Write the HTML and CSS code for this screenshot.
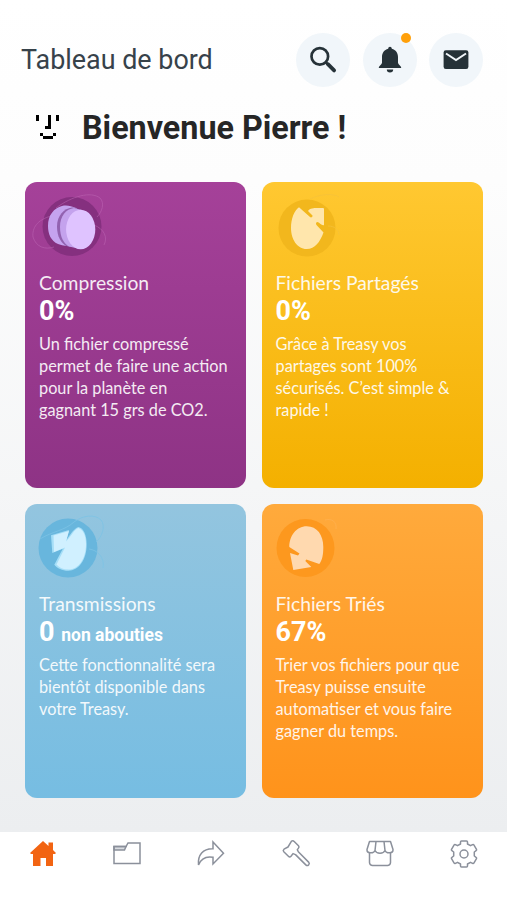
FILE: index.html
```html
<!DOCTYPE html>
<html lang="fr">
<head>
    <meta charset="UTF-8">
    <meta name="viewport" content="width=device-width, initial-scale=1.0">
    <title>Tableau de bord</title>
    <link rel="stylesheet" href="styles.css">
</head>
<body>
    <header class="topbar">
        <h2>Tableau de bord</h2>
        <div class="actions">
            <button class="round" aria-label="Rechercher">
                <svg width="28" height="28" viewBox="0 0 28 28" fill="none" stroke="#263238">
                    <circle cx="10.8" cy="10.4" r="8.3" stroke-width="2.7"/>
                    <path d="M17 16.5l2 2" stroke-width="2.5"/>
                    <path d="M18.9 18.2l6.200 6.200" stroke-width="3.800" stroke-linecap="round"/>
                </svg>
            </button>
            <button class="round" aria-label="Notifications">
                <svg width="28" height="28" viewBox="0 0 28 28" fill="#263238">
                    <path d="M14 .8c1 0 1.8.8 1.8 2 4.1 1 6.2 4.3 6.2 8.3v5.7c0 1.6 3.3 3.2 3.3 5.2H2.7c0-2 3.3-3.6 3.3-5.2v-5.7c0-4 2.1-7.3 6.2-8.3 0-1.2.8-2 1.8-2z"/>
                    <path d="M10.8 23.4h6.4a3.2 3 0 0 1-6.4 0z"/>
                </svg>
                <span class="dot"></span>
            </button>
            <button class="round" aria-label="Messages">
                <svg width="28" height="28" viewBox="0 0 28 28">
                    <rect x="1.6" y="4.3" width="24.8" height="18.7" rx="2.2" fill="#263238"/>
                    <path d="M4 7.5l10 6.6 10-6.6" fill="none" stroke="#f1f6fa" stroke-width="2"/>
                </svg>
            </button>
        </div>
    </header>

    <div class="welcome">
        <svg width="24" height="24" viewBox="0 0 24 24" shape-rendering="crispEdges">
            <path d="M0 0h3v6H0zM12 0h3v14H9v-3h3zM20 0h3v6h-3zM4 18h3v3H4zM7 21h10v3H7zM17 18h3v3h-3z"/>
        </svg>
        <h1>Bienvenue Pierre !</h1>
    </div>

    <main class="cards">
        <div class="card purple">
            <svg class="picto" width="90" height="80" viewBox="0 0 90 80">
                <circle cx="47" cy="44.5" r="29.5" fill="#85307f"/>
                <g fill="none" stroke="#c06ab8" stroke-width=".7" opacity=".7">
                    <path d="M31 26C47 14 66 9 75 16c5 5 2 14-3 19"/>
                    <path d="M26 34C12 38 7 46 8 55c3 10 12 13 21 10"/>
                    <path d="M69 43c10 4 14 12 10 20"/>
                </g>
                <path d="M37 24c5-1 9 0 14 2v39c-6-1-13-1-18-3-7-3-10-10-10-18 0-11 6-18 14-20z" fill="#c5a3ef"/>
                <path d="M47 25.5c-8 1-15 8-15 19 0 10 4 16 9 19.5l11 1V26z" fill="#9262b0"/>
                <path d="M49 26c-8 1-14 8-14 19 0 10 4 17 9 19.5L55 67l2-39z" fill="#c4a2ed"/>
                <ellipse cx="55.7" cy="47.5" rx="14.6" ry="19.7" fill="#dfc3ff"/>
            </svg>
            <h3>Compression</h3>
            <p class="value">0%</p>
            <p class="text">Un fichier compressé<br>permet de faire une action<br>pour la planète en<br>gagnant 15 grs de CO2.</p>
        </div>

        <div class="card yellow">
            <svg class="picto" width="90" height="80" viewBox="0 0 90 80">
                <circle cx="45" cy="46" r="28.5" fill="#f2b71d"/>
                <path d="M48 17c10-5 23-6 29-2M66 44c7 0 11 4 11 9" fill="none" stroke="#f5c13b" stroke-width=".7"/>
                <path d="M37 25.3l11 9.7c1 1 3 0 2.500-1.500L46 29c2-3 6-3 9-3h6q1 0 1 1v16c-2 1-4-2-6.500-3-1.500 0-2 2-1 3l7 7.500C58 60 53 67 44.700 67 35 67 29 57 29 46c0-9 3-17 8-20.700z" fill="#ffe6ac"/>
            </svg>
            <h3>Fichiers Partagés</h3>
            <p class="value">0%</p>
            <p class="text">Grâce à Treasy vos<br>partages sont 100%<br>sécurisés. C’est simple &amp;<br>rapide !</p>
        </div>

        <div class="card blue">
            <svg class="picto" width="90" height="80" viewBox="0 0 90 80">
                <circle cx="43" cy="44" r="29.5" fill="#68b6dd"/>
                <g fill="none" stroke="#7cc3e5" stroke-width=".8">
                    <path d="M15 35c13-8 24-8 34-17 9-7 21-8 27-2 5 6 1 17-5 22M64 45c8 1 16 8 14 19"/>
                </g>
                <path d="M26 31.3L44 26l-2.5 9.7c4-5 7-11 12-12.7 5 1 8.2 8 8.2 17 0 16-8 26.700-18.400 26.700-6.300 0-11-2.500-14-6l8.500-16L27.300 49z" fill="#a5def7"/>
                <path d="M28.500 31.500L44 27l-3 10.500c5-5 8-12 12.500-13.500 5 2 7.500 8 7.500 16 0 15-7.500 25.500-17.500 25.500-5.500 0-9.500-2-12-5L40 43.500 29 48z" fill="#d0f0ff"/>
            </svg>
            <h3>Transmissions</h3>
            <p class="value">0 <small>non abouties</small></p>
            <p class="text">Cette fonctionnalité sera<br>bientôt disponible dans<br>votre Treasy.</p>
        </div>

        <div class="card orange">
            <svg class="picto" width="90" height="80" viewBox="0 0 90 80">
                <circle cx="43.5" cy="44" r="29" fill="#fd981e"/>
                <path d="M63 16c7-2 12 2 11 9" fill="none" stroke="#ffb252" stroke-width=".7"/>
                <path d="M27.3 43c0-11 7-20.700 17.400-20.700S61.300 31 61.300 43c0 8-1 13-4 17l-13-4.500-1 1.500 6 6-18 3L28 49l8 2.500 1.500-2z" fill="#ffd9af"/>
            </svg>
            <h3>Fichiers Triés</h3>
            <p class="value">67%</p>
            <p class="text">Trier vos fichiers pour que<br>Treasy puisse ensuite<br>automatiser et vous faire<br>gagner du temps.</p>
        </div>
    </main>

    <nav class="tabbar">
        <a href="#" aria-label="Accueil">
            <svg width="30" height="30" viewBox="0 0 30 30" fill="#f26412">
                <path d="M15 2l5.5 5V3.500H25v7.500l3 3-1 1h-2v12h-7v-8h-5.500v8H5V15H3l-1-1z"/>
            </svg>
        </a>
        <a href="#" aria-label="Dossiers">
            <svg width="30" height="30" viewBox="0 0 30 30" fill="none" stroke="#8b909b" stroke-width="1.5">
                <path d="M2 7.5h12L12.500 11H2z" fill="#d9dce0"/>
                <path d="M2 24.5v-17h12l2-3.500h12v20.500z"/>
            </svg>
        </a>
        <a href="#" aria-label="Partager">
            <svg width="30" height="30" viewBox="0 0 30 30" fill="none" stroke="#8b909b" stroke-width="1.5">
                <path d="M17 3l10.500 11.200L17 25v-6.800C10 17 5 19.500 2.500 26 1.500 16 7 9.500 17 9.800z"/>
            </svg>
        </a>
        <a href="#" aria-label="Enchères">
            <svg width="30" height="30" viewBox="0 0 30 30" fill="none" stroke="#8b909b" stroke-width="1.5" stroke-linejoin="round">
                <path d="M10.500 2.200q1.500-.9 2.700.3l4.300 4.300q1 1.200 0 2.300l-1.200 1.500 1 2.200 10.300 10.300c1.800 2-.8 4.600-2.800 2.800L14.500 15.600l-2.500-1-2 2.700q-1.300 1.300-2.600 0L2.800 12.800q-1.200-1.300.2-2.600l4-2.200z"/>
            </svg>
        </a>
        <a href="#" aria-label="Boutique">
            <svg width="30" height="30" viewBox="0 0 30 30" fill="none" stroke="#8b909b" stroke-width="1.5" stroke-linejoin="round">
                <path d="M4.500 2.500h21l2.500 8c.4 4-6.500 4.500-8 1-1.500 3.500-8.500 3.500-10 0-1.500 3.500-8.400 3-8-1zM11 2.500l-1 9M19 2.500l1 9"/>
                <path d="M4.500 14v9.500a3 3 0 0 0 3 3h15a3 3 0 0 0 3-3V14"/>
            </svg>
        </a>
        <a href="#" aria-label="Réglages">
            <svg width="30" height="30" viewBox="0 0 30 30" fill="none" stroke="#8b909b" stroke-width="1.5" stroke-linejoin="round">
                <path d="M12.500 2h5q1 0 1 1v2l3 1.700 2-1q1-.4 1.500.4l2.500 4.200q.4.900-.4 1.400l-1.800 1.300v4l1.800 1.300q.8.500.4 1.400L25 23.900q-.5.800-1.500.4l-2-1-3 1.700v2q0 1-1 1h-5q-1 0-1-1v-2l-3-1.700-2 1q-1 .4-1.500-.4l-2.500-4.200q-.4-.9.400-1.400L4.700 17v-4l-1.800-1.300q-.8-.5-.4-1.400L5 6.100q.5-.8 1.500-.4l2 1 3-1.700V3q0-1 1-1z"/>
                <circle cx="15" cy="15" r="4"/>
            </svg>
        </a>
    </nav>
</body>
</html>
```
FILE: styles.css
```css
* {
    box-sizing: border-box;
}
body {
    display: flex;
    flex-direction: column;
    height: 900px;
    margin: 0;
    font-family: Roboto, sans-serif;
    background: linear-gradient(#ffffff 0, #fdfdfd 180px, #eceef0 832px);
    overflow: hidden;
}
h1, h2, h3, p {
    margin: 0;
}
.topbar {
    display: flex;
    justify-content: space-between;
    align-items: center;
    height: 104px;
    padding: 16px 24px 0 21px;
}
.topbar h2 {
    font-size: 26.9px;
    font-weight: 400;
    color: #37424a;
}
.actions {
    display: flex;
    gap: 12.5px;
}
.round {
    position: relative;
    display: flex;
    justify-content: center;
    align-items: center;
    width: 54px;
    height: 54px;
    padding: 0;
    border: none;
    border-radius: 50%;
    background: #f1f6fa;
}
.dot {
    position: absolute;
    top: 0;
    right: 6px;
    width: 10px;
    height: 10px;
    border-radius: 50%;
    background: #ffa00a;
}
.welcome {
    display: flex;
    align-items: center;
    gap: 22px;
    height: 46px;
    padding-left: 36px;
}
.welcome h1 {
    padding-top: 2px;
    font-size: 32.3px;
    font-weight: 700;
    color: #262626;
}
.cards {
    display: grid;
    grid-template-columns: 221px 221px;
    grid-template-rows: 306px 294px;
    gap: 16px 15.5px;
    padding: 32px 0 0 25px;
}
.card {
    padding: 0 14px;
    border-radius: 12px;
    color: #ffffff;
}
.purple {
    background: linear-gradient(#a54199, #8e3385);
}
.yellow {
    background: linear-gradient(#ffc831, #f4b000);
}
.blue {
    background: linear-gradient(#93c5df, #76bde2);
}
.orange {
    background: linear-gradient(#ffaa3c, #ff931b);
}
.picto {
    display: block;
    margin-left: -14px;
}
.card h3 {
    margin-top: 9px;
    font-family: Lato, sans-serif;
    font-size: 19.3px;
    font-weight: 400;
    line-height: 24px;
    opacity: 0.9;
}
.value {
    height: 32px;
    font-size: 27px;
    font-weight: 700;
    line-height: 33px;
}
.value small {
    font-size: 17.5px;
}
.text {
    margin-top: 6px;
    font-family: Lato, sans-serif;
    font-size: 16.3px;
    line-height: 22px;
    white-space: nowrap;
    opacity: 0.9;
}
.blue h3, .orange h3 {
    margin-top: 8px;
}
.tabbar {
    display: flex;
    justify-content: space-between;
    height: 68px;
    margin-top: auto;
    padding: 7px 28px 0;
    background: #ffffff;
}
.tabbar a {
    height: 30px;
}
```
